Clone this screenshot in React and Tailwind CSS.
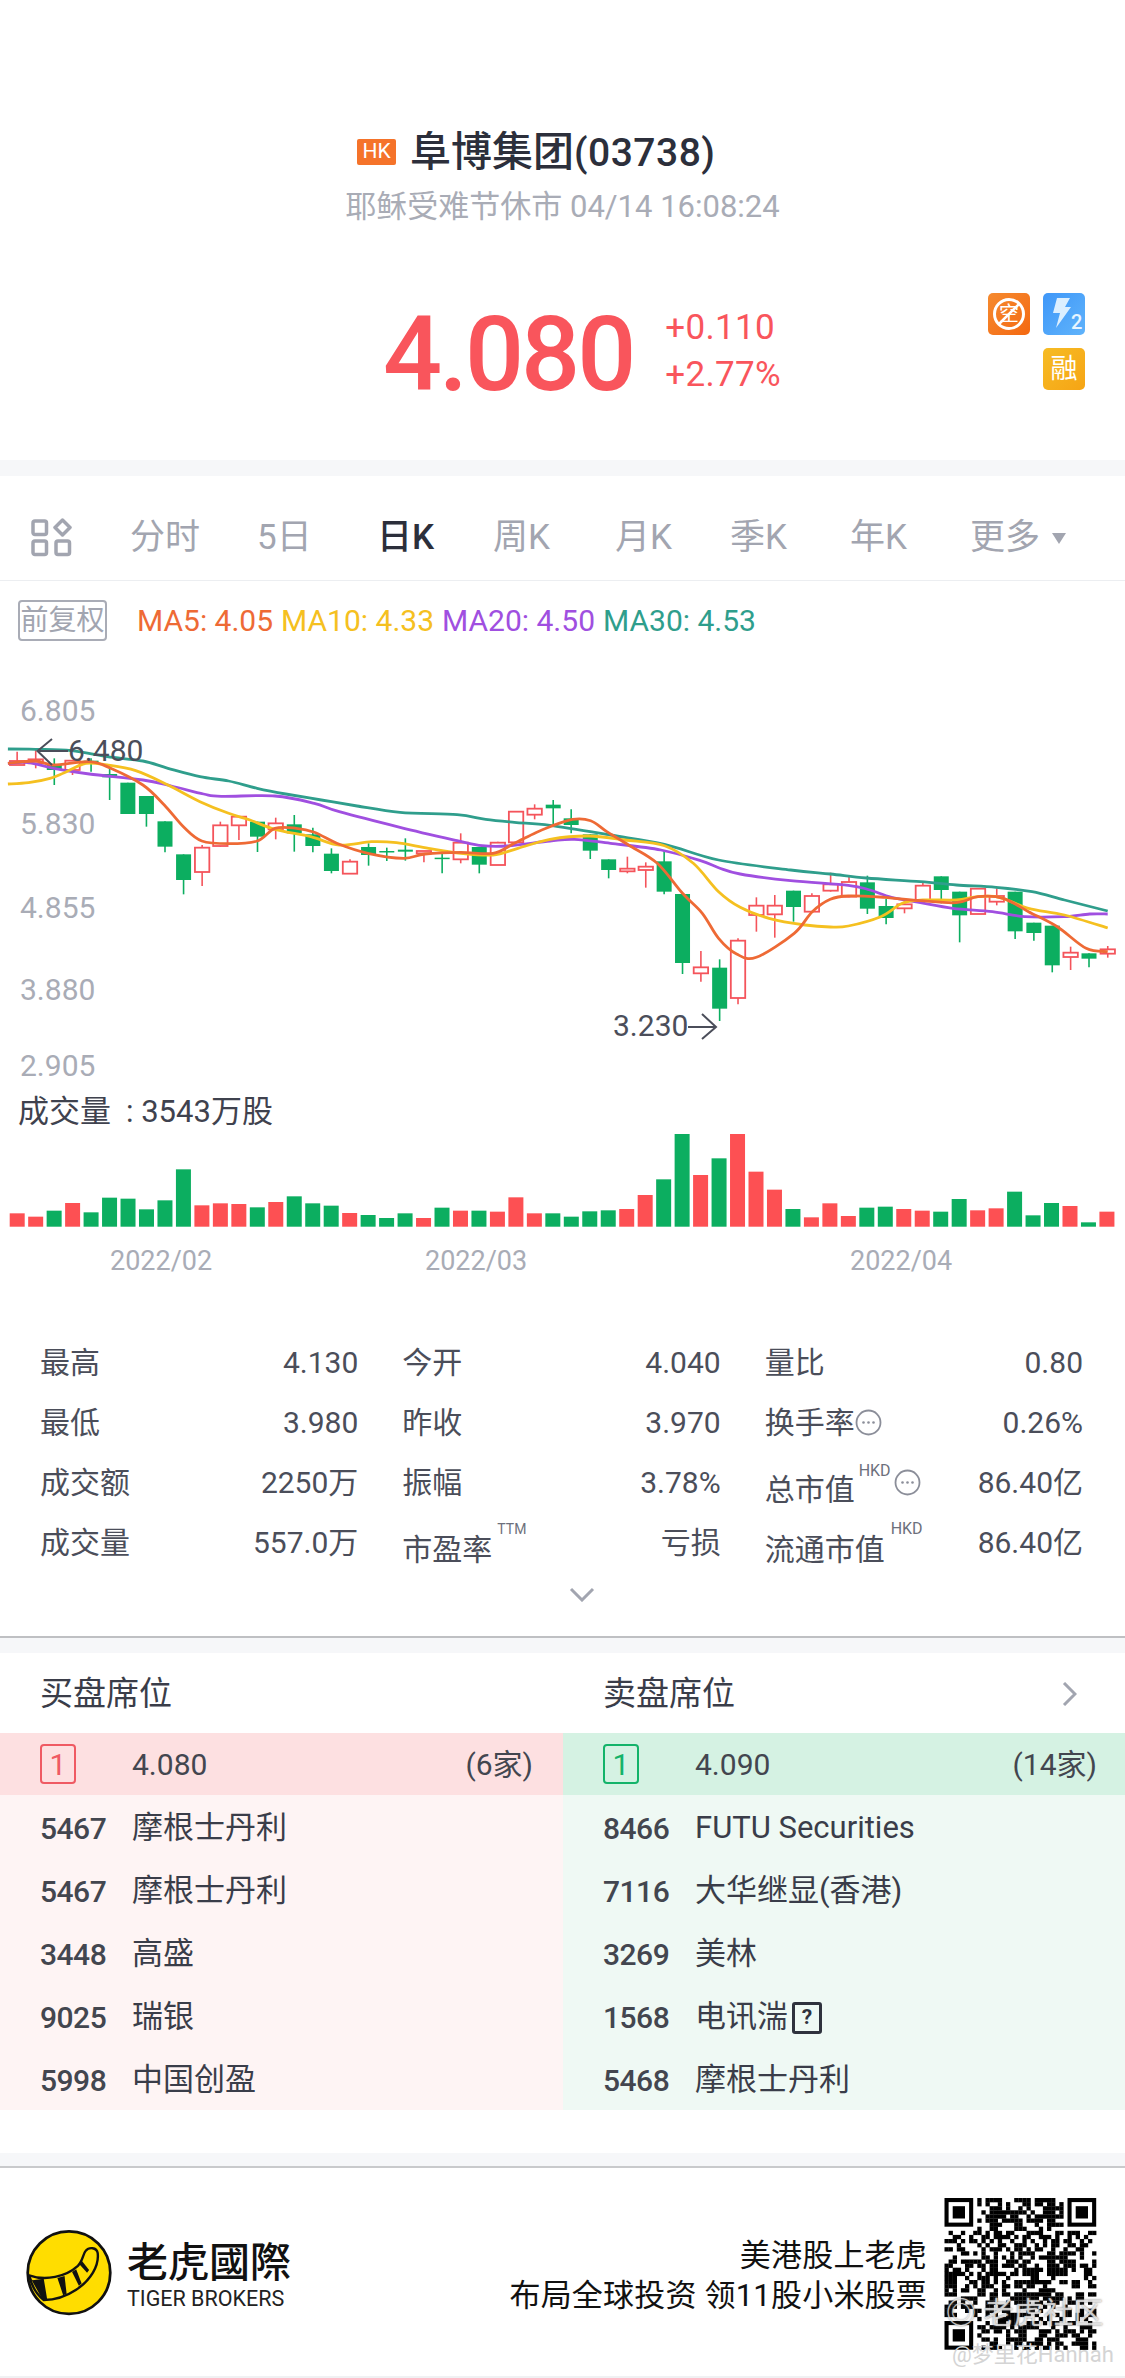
// 阜博集团 quote page
const RED = "#f4545b";
const GREEN = "#0cae60";

// [zoomX, bodyTop, bodyBottom, wickTop, wickBottom, up?]  (left half of the chart)
const candlesLeft = [
    [48, 183, 195, 155, 195, 1], [100, 178, 190, 150, 205, 1], [152, 195, 210, 175, 255, 0],
    [203, 182, 210, 182, 225, 1], [255, 182, 190, 175, 215, 0], [307, 222, 232, 205, 300, 0],
    [358, 248, 342, 248, 342, 0], [410, 288, 342, 288, 380, 0], [462, 364, 440, 364, 457, 0],
    [514, 463, 540, 463, 583, 0], [566, 443, 516, 435, 558, 1], [617, 376, 438, 365, 440, 1],
    [669, 350, 376, 350, 420, 1], [721, 365, 410, 365, 456, 0], [772, 370, 388, 353, 418, 1],
    [824, 373, 400, 345, 455, 0], [876, 403, 438, 383, 457, 0], [928, 461, 513, 445, 520, 0],
    [980, 485, 521, 478, 521, 1], [1032, 441, 465, 430, 497, 0], [1083, 453, 455, 443, 483, 0],
    [1135, 449, 455, 415, 482, 0], [1187, 453, 460, 453, 487, 1], [1238, 473, 476, 455, 520, 0],
    [1290, 428, 478, 400, 490, 1], [1342, 441, 494, 441, 520, 0], [1394, 428, 495, 425, 495, 1],
    [1445, 335, 427, 333, 427, 1], [1497, 326, 344, 313, 358, 1], [1549, 314, 325, 300, 375, 0],
];
const candlesRight = [
    [31, 355, 375, 328, 400, 0], [84, 403, 452, 403, 477, 0], [135, 478, 510, 478, 535, 0],
    [187, 506, 514, 470, 520, 1], [238, 500, 510, 487, 563, 1], [289, 484, 575, 450, 583, 0],
    [340, 582, 789, 582, 822, 0], [391, 802, 820, 753, 845, 1], [443, 803, 926, 778, 963, 0],
    [494, 722, 894, 715, 913, 1], [545, 617, 645, 592, 695, 1], [596, 617, 643, 585, 713, 1],
    [648, 572, 621, 572, 665, 0], [699, 588, 635, 580, 635, 1], [751, 553, 572, 518, 575, 1],
    [802, 546, 590, 530, 592, 1], [853, 547, 626, 527, 642, 0], [905, 618, 654, 597, 673, 0],
    [956, 613, 625, 600, 640, 1], [1007, 557, 600, 548, 602, 1], [1058, 529, 570, 529, 610, 0],
    [1109, 575, 646, 575, 727, 0], [1160, 566, 642, 566, 642, 1], [1212, 588, 605, 565, 616, 1],
    [1263, 575, 694, 575, 717, 0], [1315, 668, 699, 668, 722, 0], [1366, 677, 796, 677, 817, 0],
    [1417, 758, 771, 740, 810, 1], [1468, 760, 776, 760, 802, 0], [1520, 748, 761, 738, 773, 1],
];

const toLeft = ([x, y]) => [x / 2.8, 700 + y / 3];
const toRight = ([x, y]) => [560 + x / 2.775, 700 + y / 3];

const maLines = [
    {
        color: "#2f9e8c",
        left: [[22, 147], [100, 148], [200, 152], [300, 170], [400, 183], [470, 205], [560, 230], [640, 243], [720, 265], [800, 282], [900, 300], [1000, 318], [1120, 337], [1280, 344], [1360, 358], [1440, 367], [1540, 376]],
        right: [[0, 375], [140, 405], [290, 433], [440, 480], [640, 510], [750, 522], [850, 534], [1000, 545], [1100, 555], [1210, 562], [1310, 575], [1400, 600], [1520, 633]],
    },
    {
        color: "#a04fe0",
        left: [[22, 190], [80, 188], [150, 205], [250, 222], [400, 240], [480, 258], [570, 282], [620, 289], [770, 288], [880, 310], [950, 335], [1120, 382], [1280, 422], [1350, 437], [1420, 438], [1540, 423]],
        right: [[0, 421], [40, 418], [140, 430], [280, 450], [390, 482], [440, 503], [500, 522], [640, 542], [800, 556], [860, 570], [920, 592], [1000, 608], [1090, 625], [1200, 635], [1290, 650], [1400, 650], [1470, 642], [1520, 642]],
    },
    {
        color: "#f5c020",
        left: [[22, 252], [80, 248], [140, 235], [180, 218], [240, 190], [300, 195], [380, 212], [470, 255], [560, 305], [640, 340], [700, 360], [770, 388], [870, 410], [950, 435], [1040, 425], [1110, 428], [1200, 445], [1290, 460], [1380, 465], [1450, 445], [1540, 418]],
        right: [[0, 415], [80, 408], [180, 420], [290, 437], [370, 490], [440, 575], [500, 622], [580, 655], [680, 675], [750, 681], [800, 678], [890, 650], [950, 610], [1007, 600], [1100, 600], [1160, 590], [1220, 592], [1300, 625], [1400, 645], [1520, 684]],
    },
    {
        color: "#ee6a35",
        left: [[22, 190], [100, 183], [150, 195], [250, 185], [310, 205], [400, 255], [460, 315], [515, 382], [565, 423], [640, 431], [720, 423], [770, 385], [830, 385], [880, 397], [950, 433], [1030, 460], [1130, 475], [1190, 462], [1290, 457], [1380, 460], [1440, 430], [1500, 398], [1540, 380]],
        right: [[0, 375], [35, 358], [85, 362], [130, 395], [190, 435], [270, 490], [340, 580], [395, 640], [440, 715], [490, 762], [545, 772], [650, 700], [700, 635], [750, 598], [800, 588], [900, 592], [1000, 602], [1100, 608], [1160, 590], [1230, 595], [1300, 635], [1380, 680], [1460, 745], [1520, 755]],
    },
];

// catmull-rom through the points, so the averages bend instead of kinking
function smoothPath(pts) {
    let d = `M${pts[0][0].toFixed(1)} ${pts[0][1].toFixed(1)}`;
    for (let i = 0; i < pts.length - 1; i++) {
        const p0 = pts[Math.max(i - 1, 0)];
        const p1 = pts[i];
        const p2 = pts[i + 1];
        const p3 = pts[Math.min(i + 2, pts.length - 1)];
        const c1 = [p1[0] + (p2[0] - p0[0]) / 6, p1[1] + (p2[1] - p0[1]) / 6];
        const c2 = [p2[0] - (p3[0] - p1[0]) / 6, p2[1] - (p3[1] - p1[1]) / 6];
        d += `C${c1[0].toFixed(1)} ${c1[1].toFixed(1)} ${c2[0].toFixed(1)} ${c2[1].toFixed(1)} ${p2[0].toFixed(1)} ${p2[1].toFixed(1)}`;
    }
    return d;
}

const volumes = [
    [400, 1], [410, 1], [392, 0], [369, 1], [397, 0], [353, 0], [356, 0], [388, 0], [361, 0], [268, 0],
    [376, 1], [370, 1], [372, 1], [382, 0], [366, 1], [349, 0], [370, 0], [377, 0], [399, 1], [405, 0],
    [414, 0], [400, 0], [414, 1], [383, 0], [392, 1], [392, 0], [395, 1], [352, 1], [400, 1], [400, 0],
    [410, 0], [394, 0], [391, 0], [387, 1], [345, 1], [298, 0], [153, 0], [285, 1], [235, 0], [156, 1],
    [275, 1], [329, 1], [387, 0], [412, 1], [370, 1], [408, 1], [383, 0], [380, 0], [387, 1], [392, 1],
    [395, 0], [357, 0], [391, 1], [385, 1], [335, 0], [406, 0], [369, 0], [378, 1], [427, 0], [395, 1],
];

const tabs = [
    { label: "分时", w: "w-[127px]" },
    { label: "5日", w: "w-[120px]" },
    { label: "日K", w: "w-[116px]", active: true },
    { label: "周K", w: "w-[122px]" },
    { label: "月K", w: "w-[115px]" },
    { label: "季K", w: "w-[120px]" },
    { label: "年K", w: "w-[120px]" },
];

const buyers = [
    ["5467", "摩根士丹利"],
    ["5467", "摩根士丹利"],
    ["3448", "高盛"],
    ["9025", "瑞银"],
    ["5998", "中国创盈"],
];
const sellers = [
    ["8466", "FUTU Securities"],
    ["7116", "大华继显(香港)"],
    ["3269", "美林"],
    ["1568", "电讯湍"],
    ["5468", "摩根士丹利"],
];

function Candle({ c, x, y }) {
    const color = c[5] ? RED : GREEN;
    const cx = x(c[0]);
    const top = y(c[1]);
    const bottom = y(c[2]);
    return (
        <g>
            <line x1={cx} x2={cx} y1={y(c[3])} y2={y(c[4])} stroke={color} strokeWidth="1.6" />
            {c[5] ? (
                <rect x={cx - 7.2} y={top} width="14.4" height={bottom - top} fill="#fff" stroke={color} strokeWidth="1.8" />
            ) : (
                <rect x={cx - 7.5} y={top} width="15" height={Math.max(bottom - top, 1.5)} fill={color} />
            )}
        </g>
    );
}

function KlineChart() {
    const yz = (v) => 700 + v / 3;
    const labels = [["6.805", 710], ["5.830", 823], ["4.855", 907], ["3.880", 989], ["2.905", 1065]];
    return (
        <svg width="1125" height="430" viewBox="0 660 1125 430" className="block">
            {labels.map(([t, y]) => (
                <text key={t} x="20" y={y + 11} fontSize="30" fill="#a9acb6">{t}</text>
            ))}
            {candlesLeft.map((c, i) => (
                <Candle key={i} c={c} x={(v) => v / 2.8} y={yz} />
            ))}
            {candlesRight.map((c, i) => (
                <Candle key={i} c={c} x={(v) => 560 + v / 2.775} y={yz} />
            ))}
            {maLines.map((l) => (
                <path
                    key={l.color}
                    d={smoothPath([...l.left.map(toLeft), ...l.right.slice(1).map(toRight)])}
                    fill="none"
                    stroke={l.color}
                    strokeWidth="2.8"
                    strokeLinejoin="round"
                />
            ))}
            <path d="M52 739L37.500 751L52 765M37.500 751H68" fill="none" stroke="#4b4e5a" strokeWidth="2" />
            <text x="68" y="761" fontSize="30" fill="#4b4e5a">6.480</text>
            <text x="613" y="1036" fontSize="30" fill="#4b4e5a">3.230</text>
            <path d="M688 1027H716M702 1014L716 1027L702 1039" fill="none" stroke="#4b4e5a" strokeWidth="2" />
        </svg>
    );
}

function VolumeChart() {
    const base = 1226.7;
    return (
        <svg width="1125" height="156" viewBox="0 1134 1125 156" className="block">
            {volumes.map(([top, up], i) => {
                const y = 1080 + top / 3;
                return (
                    <rect
                        key={i}
                        x={17.2 + 18.47 * i - 7.5}
                        y={y}
                        width="15"
                        height={base - y}
                        fill={up ? "#fd5053" : GREEN}
                    />
                );
            })}
            {[["2022/02", 110], ["2022/03", 425], ["2022/04", 850]].map(([t, x]) => (
                <text key={t} x={x} y="1270" fontSize="27" fill="#a9acb6">{t}</text>
            ))}
        </svg>
    );
}

function InfoDots() {
    return (
        <svg width="27" height="27" viewBox="0 0 27 27" className="shrink-0">
            <circle cx="13.500" cy="13.500" r="12" fill="none" stroke="#8b8e99" strokeWidth="1.800" />
            <circle cx="8.500" cy="13.500" r="1.300" fill="#8b8e99" />
            <circle cx="13.500" cy="13.500" r="1.300" fill="#8b8e99" />
            <circle cx="18.500" cy="13.500" r="1.300" fill="#8b8e99" />
        </svg>
    );
}

function Stat({ label, value }) {
    return (
        <div className="flex h-[60px] items-center justify-between">
            {label}
            <span>{value}</span>
        </div>
    );
}

function Sup({ children, className }) {
    return <span className={`absolute leading-[24px] text-[#6d707c] ${className}`}>{children}</span>;
}

function SeatRows({ rows, bg, extra }) {
    return (
        <div className={bg}>
            {rows.map(([code, name], i) => (
                <div key={i} className="flex h-[63px] items-center pt-[4px]">
                    <span className="w-[92px] text-[30px] font-medium tracking-[-0.5px] text-[#43464f]">{code}</span>
                    <span className="text-[31px] text-[#3a3d49]">{name}</span>
                    {extra && i === 3 ? extra : null}
                </div>
            ))}
        </div>
    );
}

function QrCode() {
    // not the real payload, only the look of the code
    const n = 37;
    const size = 4.100;
    const cells = [];
    const inFinder = (r, c) => (r < 8 && c < 8) || (r < 8 && c >= n - 8) || (r >= n - 8 && c < 8);
    let seed = 7341;
    for (let r = 0; r < n; r++) {
        for (let c = 0; c < n; c++) {
            seed = (seed * 1103515245 + 12345) & 0x7fffffff;
            if (!inFinder(r, c) && (seed >> 16) % 100 < 52) {
                cells.push(<rect key={`${r}-${c}`} x={c * size} y={r * size} width={size + 0.2} height={size + 0.2} />);
            }
        }
    }
    const finder = (x, y) => (
        <g key={`${x}-${y}`}>
            <rect x={x} y={y} width={size * 7} height={size * 7} />
            <rect x={x + size} y={y + size} width={size * 5} height={size * 5} fill="#fff" />
            <rect x={x + size * 2} y={y + size * 2} width={size * 3} height={size * 3} />
        </g>
    );
    return (
        <svg width="153" height="152" viewBox="0 0 152 152" className="block shrink-0" fill="#000">
            {cells}
            {finder(0, 0)}
            {finder(size * 30, 0)}
            {finder(0, size * 30)}
        </svg>
    );
}

function TigerLogo() {
    return (
        <svg width="86" height="86" viewBox="33 35 252 252" className="shrink-0">
            <circle cx="159" cy="160" r="121" fill="#ffdd00" stroke="#111" strokeWidth="8" />
            <path
                d="M42 168C90 185 150 172 185 140C200 125 200 105 208 96C218 84 240 86 243 102C248 140 222 182 180 210C150 230 115 240 85 240C65 225 50 200 42 168Z"
                fill="#ffdd00"
                stroke="#111"
                strokeWidth="7"
                strokeLinejoin="round"
            />
            <path d="M42 168L52 182L85 178L95 238L82 240Z" fill="#111" />
            <path d="M125 176L146 170L152 222L142 226Z" fill="#111" />
            <path d="M168 158L180 150L196 192L188 198Z" fill="#111" />
            <path d="M190 136L197 126L218 152L212 160Z" fill="#111" />
        </svg>
    );
}

export default function App() {
    return (
        <div className="w-[1125px] bg-white font-[Roboto,'Noto_Sans_CJK_SC',sans-serif]">
            {/* quote header */}
            <div className="h-[460px] pt-[128px]">
                <div className="flex h-[48px] items-center pl-[357px]">
                    <span className="mr-[14px] flex h-[26px] w-[39px] items-center justify-center rounded-[2px] bg-[#f5732a] text-[21px] text-white">HK</span>
                    <span className="text-[41px] font-medium leading-[48px] text-[#2c2f3b]">
                        阜博集团<span className="text-[39px] tracking-[0.5px]">(03738)</span>
                    </span>
                </div>
                <div className="mt-[11px] text-center text-[31px] leading-[40px] text-[#a9acb6]">耶稣受难节休市 04/14 16:08:24</div>
                <div className="mt-[66px] flex items-start justify-between pl-[383px] pr-[40px]">
                    <div className="flex items-start">
                        <span className="text-[104px] font-medium leading-[124px] tracking-[-3px] text-[#f9555c]">4.080</span>
                        <div className="ml-[32px] mt-[11px] text-[35px] leading-[47px] tracking-[0.3px] text-[#f9555c]">
                            <div>+0.110</div>
                            <div>+2.77%</div>
                        </div>
                    </div>
                    <div className="grid w-[97px] grid-cols-2 gap-[13px]">
                        <div className="flex h-[42px] w-[42px] items-center justify-center rounded-[5px] bg-gradient-to-br from-[#f58a2e] to-[#f4680f]">
                            <svg width="34" height="34" viewBox="0 0 34 34">
                                <circle cx="17" cy="17" r="14.500" fill="none" stroke="#fff" strokeWidth="3" />
                                <text x="17" y="24" fontSize="20" fill="#fff" textAnchor="middle">空</text>
                                <line x1="7" y1="27" x2="27" y2="7" stroke="#fff" strokeWidth="2.500" />
                            </svg>
                        </div>
                        <div className="h-[42px] w-[42px] rounded-[5px] bg-gradient-to-br from-[#3f97f8] to-[#5fb3fb]">
                            <svg width="42" height="42" viewBox="0 0 42 42">
                                <path d="M14 5H27L22 14H28L13 35L17 20H10Z" fill="#dcefff" />
                                <text x="28" y="36" fontSize="20" fontWeight="500" fill="#e8f5ff">2</text>
                            </svg>
                        </div>
                        <div className="col-start-2 flex h-[42px] w-[42px] items-center justify-center rounded-[5px] bg-gradient-to-br from-[#f6bc24] to-[#f6a414] text-[27px] leading-none text-white">融</div>
                    </div>
                </div>
            </div>
            <div className="h-[16px] bg-[#f6f7f9]" />

            {/* period tabs */}
            <div className="flex h-[105px] items-center border-b border-[#eceef1] pl-[31px] pt-[20px]">
                <svg width="41" height="40" viewBox="0 0 41 40" fill="none" stroke="#a2a5b0" strokeWidth="3.500" className="mr-[58px] shrink-0">
                    <rect x="2" y="3" width="13.500" height="13.500" rx="2" />
                    <rect x="2" y="23" width="13.500" height="13.500" rx="2" />
                    <rect x="25" y="23" width="13.500" height="13.500" rx="2" />
                    <path d="M31.500 2L39 9.500L31.500 17L24 9.500Z" strokeLinejoin="round" />
                </svg>
                {tabs.map((t) => (
                    <span
                        key={t.label}
                        className={
                            t.active
                                ? `${t.w} text-[35px] font-medium leading-[44px] text-[#2c2f3b]`
                                : `${t.w} text-[35px] leading-[44px] text-[#a2a5b0]`
                        }
                    >
                        {t.label}
                    </span>
                ))}
                <span className="text-[35px] leading-[44px] text-[#a2a5b0]">更多</span>
                <svg width="14" height="11" viewBox="0 0 14 11" className="ml-[12px]">
                    <path d="M0 0H14L7 11Z" fill="#a2a5b0" />
                </svg>
            </div>

            {/* adjust + moving averages */}
            <div className="flex h-[79px] items-center pl-[18px]">
                <span className="flex h-[41px] w-[89px] items-center justify-center rounded-[4px] border-2 border-[#a9acb6] text-[28px] leading-none text-[#a2a5b0]">前复权</span>
                <span className="ml-[30px] text-[30px] text-[#ee6a35]">MA5: 4.05</span>
                <span className="ml-[8px] text-[30px] text-[#f5c020]">MA10: 4.33</span>
                <span className="ml-[8px] text-[30px] text-[#a04fe0]">MA20: 4.50</span>
                <span className="ml-[8px] text-[30px] text-[#2f9e8c]">MA30: 4.53</span>
            </div>

            <KlineChart />
            <div className="flex h-[44px] items-center pl-[18px] text-[31px] text-[#3f424e]">
                成交量<span className="ml-[15px]">: 3543万股</span>
            </div>
            <VolumeChart />

            {/* stats */}
            <div className="grid grid-cols-3 gap-x-[44px] pl-[40px] pr-[42px] pt-[42px] text-[30px] text-[#4b4e5a]">
                <Stat label={<span>最高</span>} value="4.130" />
                <Stat label={<span>今开</span>} value="4.040" />
                <Stat label={<span>量比</span>} value="0.80" />
                <Stat label={<span>最低</span>} value="3.980" />
                <Stat label={<span>昨收</span>} value="3.970" />
                <Stat
                    label={
                        <span className="flex items-center">
                            换手率
                            <InfoDots />
                        </span>
                    }
                    value="0.26%"
                />
                <Stat label={<span>成交额</span>} value="2250万" />
                <Stat label={<span>振幅</span>} value="3.78%" />
                <Stat
                    label={
                        <span className="relative flex items-center">
                            <span className="mt-[14px]">总市值</span>
                            <Sup className="left-[94px] top-[6px] text-[16px]">HKD</Sup>
                            <span className="ml-[39px]"><InfoDots /></span>
                        </span>
                    }
                    value="86.40亿"
                />
                <Stat label={<span>成交量</span>} value="557.0万" />
                <Stat
                    label={
                        <span className="relative mt-[14px]">
                            市盈率
                            <Sup className="left-[95px] top-[-10px] text-[14px]">TTM</Sup>
                        </span>
                    }
                    value="亏损"
                />
                <Stat
                    label={
                        <span className="relative mt-[14px]">
                            流通市值
                            <Sup className="left-[126px] top-[-10px] text-[16px]">HKD</Sup>
                        </span>
                    }
                    value="86.40亿"
                />
            </div>
            <div className="flex h-[64px] items-center justify-center pb-[20px]">
                <svg width="26" height="15" viewBox="0 0 26 15" fill="none" stroke="#a2a5b0" strokeWidth="3" className="ml-[39px]">
                    <path d="M2 2L13 13L24 2" />
                </svg>
            </div>
            <div className="h-[17px] border-t-2 border-[#bfc0c3] bg-[#f6f7f9]" />

            {/* broker seats */}
            <div className="flex h-[80px] items-center pt-[2px]">
                <div className="w-[563px] pl-[40px] text-[33px] text-[#3a3d49]">买盘席位</div>
                <div className="flex flex-1 items-center justify-between pl-[40px] pr-[48px] text-[33px] text-[#3a3d49]">
                    卖盘席位
                    <svg width="15" height="24" viewBox="0 0 15 24" fill="none" stroke="#a2a5b0" strokeWidth="3">
                        <path d="M2 1L13 12L2 23" />
                    </svg>
                </div>
            </div>
            <div className="grid grid-cols-[563px_562px]">
                <div className="flex h-[62px] items-center justify-between bg-[#fde0e1] pl-[40px] pr-[30px]">
                    <span className="flex items-center">
                        <span className="flex h-[40px] w-[36px] items-center justify-center rounded-[4px] border-2 border-[#ef5a63] text-[30px] text-[#ef5a63]">1</span>
                        <span className="ml-[56px] text-[30px] text-[#43464f]">4.080</span>
                    </span>
                    <span className="text-[30px] text-[#43464f]">(6家)</span>
                </div>
                <div className="flex h-[62px] items-center justify-between bg-[#d5f2e3] pl-[40px] pr-[28px]">
                    <span className="flex items-center">
                        <span className="flex h-[40px] w-[36px] items-center justify-center rounded-[4px] border-2 border-[#14b36a] text-[30px] text-[#14b36a]">1</span>
                        <span className="ml-[56px] text-[30px] text-[#43464f]">4.090</span>
                    </span>
                    <span className="text-[30px] text-[#43464f]">(14家)</span>
                </div>
                <SeatRows rows={buyers} bg="bg-[#fef4f4] pl-[40px]" />
                <SeatRows
                    rows={sellers}
                    bg="bg-[#eff9f4] pl-[40px]"
                    extra={
                        <span className="ml-[4px] flex h-[32px] w-[30px] items-center justify-center rounded-[3px] border-[3px] border-[#2f323d] text-[21px] font-bold leading-none text-[#2f323d]">?</span>
                    }
                />
            </div>
            <div className="h-[43px]" />
            <div className="h-[13px] bg-[#f6f7f9]" />

            {/* footer banner */}
            <div className="relative flex h-[212px] items-start justify-between border-t-2 border-[#c9cacc] pl-[26px] pr-[28px]">
                <div className="mt-[62px] flex items-center">
                    <TigerLogo />
                    <div className="ml-[15px]">
                        <div className="font-['Noto_Sans_CJK_TC',sans-serif] text-[41px] font-medium leading-[48px] text-[#111]">老虎國際</div>
                        <div className="mt-[3px] text-[21.5px] leading-[26px] text-[#222]">TIGER BROKERS</div>
                    </div>
                </div>
                <div className="flex items-start">
                    <div className="mt-[68px] text-right text-[31px] leading-[40px] tracking-[0.2px] text-[#111]">
                        <div>美港股上老虎</div>
                        <div>布局全球投资 领11股小米股票</div>
                    </div>
                    <div className="ml-[17px] mt-[30px]">
                        <QrCode />
                    </div>
                </div>
                {/* platform watermarks */}
                <span className="absolute left-[946px] top-[125px] text-[30px] leading-[40px] text-white/70 [text-shadow:0_0_2px_#777]">◎ 老虎社区</span>
                <span className="absolute left-[952px] top-[173px] text-[22px] leading-[28px] text-[#d4d4d4]">@梦里花Hannah</span>
                <div className="absolute bottom-0 left-0 h-[2px] w-full bg-[#f0f1f3]" />
            </div>
        </div>
    );
}
